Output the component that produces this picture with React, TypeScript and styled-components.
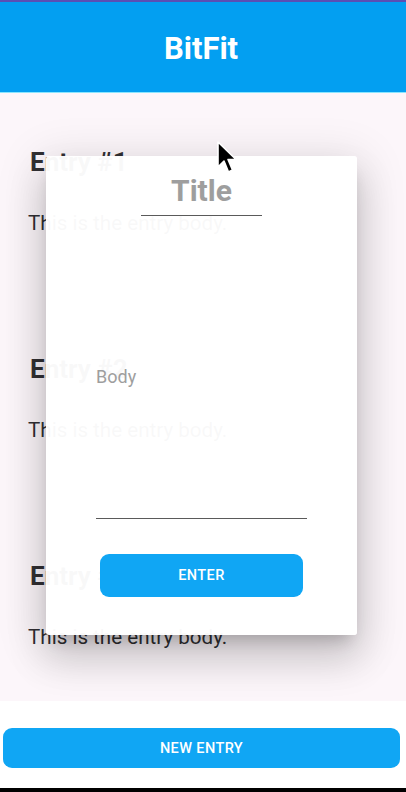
import React from "react";
import styled, { createGlobalStyle } from "styled-components";

const GlobalStyle = createGlobalStyle`
  html, body { margin: 0; padding: 0; }
  body { font-family: Roboto, "Noto Sans", Arial, sans-serif; background: #ffffff; }
  * { box-sizing: border-box; }
`;

const Screen = styled.div`
  position: relative;
  width: 406px;
  height: 792px;
  display: flex;
  flex-direction: column;
  overflow: hidden;
  background: #ffffff;
`;

const StatusStrip = styled.div`
  height: 2px;
  background: #5b4fb3;
  flex: none;
`;

const Header = styled.header`
  height: 91px;
  flex: none;
  background: #039ff1;
  border-bottom: 1px solid #8be6ff;
  display: flex;
  align-items: center;
  justify-content: center;
`;

const AppTitle = styled.h1`
  margin: 0 4px 0 0;
  color: #ffffff;
  font-size: 31px;
  font-weight: 700;
  line-height: 36px;
  padding-top: 4px;
`;

const EntryList = styled.main`
  flex: 1;
  background: #fcf6fa;
  padding: 53px 28px 0 28px;
  display: flex;
  flex-direction: column;
  gap: 118px;
`;

const Entry = styled.section`
  display: flex;
  flex-direction: column;
  gap: 33px;
`;

const EntryTitle = styled.h2`
  margin: 0 0 0 2px;
  font-size: 26px;
  line-height: 32px;
  font-weight: 700;
  color: #313033;
`;

const EntryBody = styled.p`
  margin: 0;
  font-size: 20.6px;
  line-height: 24px;
  color: #302f33;
`;

const Footer = styled.footer`
  flex: none;
  height: 87px;
  background: #ffffff;
  padding: 27px 6px 0 3px;
`;

const PrimaryButton = styled.button<{ $h: number }>`
  width: 100%;
  height: ${(p) => p.$h}px;
  border: none;
  border-radius: 9px;
  background: #10a6f4;
  color: #ffffff;
  font-family: Roboto, "Noto Sans", Arial, sans-serif;
  font-size: 14.5px;
  font-weight: 500;
  letter-spacing: 0.4px;
  display: flex;
  align-items: center;
  justify-content: center;
  padding: 0;
`;

const BottomBar = styled.div`
  height: 4px;
  flex: none;
  background: #000000;
`;

const Dialog = styled.div`
  position: absolute;
  left: 46px;
  top: 156px;
  width: 311px;
  height: 479px;
  background: rgba(255, 255, 255, 0.97);
  border-radius: 3px;
  box-shadow: 0 11px 15px -7px rgba(0, 0, 0, 0.2),
    0 24px 38px 3px rgba(0, 0, 0, 0.13), 0 9px 46px 8px rgba(0, 0, 0, 0.11);
  display: flex;
  flex-direction: column;
  align-items: center;
  padding-top: 17px;
`;

const TitleField = styled.div`
  width: 121px;
  height: 43px;
  border-bottom: 1px solid #5a5a5a;
  text-align: center;
  font-size: 30px;
  line-height: 36px;
  font-weight: 700;
  color: #9e9e9e;
`;

const BodyField = styled.div`
  width: 211px;
  height: 303px;
  border-bottom: 1px solid #5a5a5a;
  padding-top: 150px;
  font-size: 18px;
  line-height: 22px;
  color: #9e9e9e;
`;

const DialogActions = styled.div`
  margin-top: 35px;
  width: 203px;
`;

const Cursor = styled.svg`
  position: absolute;
  left: 215px;
  top: 139px;
`;

const entries = [
  { title: "Entry #1", body: "This is the entry body." },
  { title: "Entry #2", body: "This is the entry body." },
  { title: "Entry #3", body: "This is the entry body." },
];

export default function App() {
  return (
    <>
      <GlobalStyle />
      <Screen>
        <StatusStrip />
        <Header>
          <AppTitle>BitFit</AppTitle>
        </Header>
        <EntryList>
          {entries.map((e) => (
            <Entry key={e.title}>
              <EntryTitle>{e.title}</EntryTitle>
              <EntryBody>{e.body}</EntryBody>
            </Entry>
          ))}
        </EntryList>
        <Footer>
          <PrimaryButton $h={40}>NEW ENTRY</PrimaryButton>
        </Footer>
        <BottomBar />
        <Dialog>
          <TitleField>Title</TitleField>
          <BodyField>Body</BodyField>
          <DialogActions>
            <PrimaryButton $h={43}>ENTER</PrimaryButton>
          </DialogActions>
        </Dialog>
        <Cursor width="26" height="38" viewBox="0 0 26 38">
          <path
            d="M3 3 L3 28 L9 22 L13.5 33 L17.5 31 L13 20.5 L21 20.5 Z"
            fill="#000000"
            stroke="#ffffff"
            strokeWidth="1.6"
            strokeLinejoin="round"
          />
        </Cursor>
      </Screen>
    </>
  );
}
